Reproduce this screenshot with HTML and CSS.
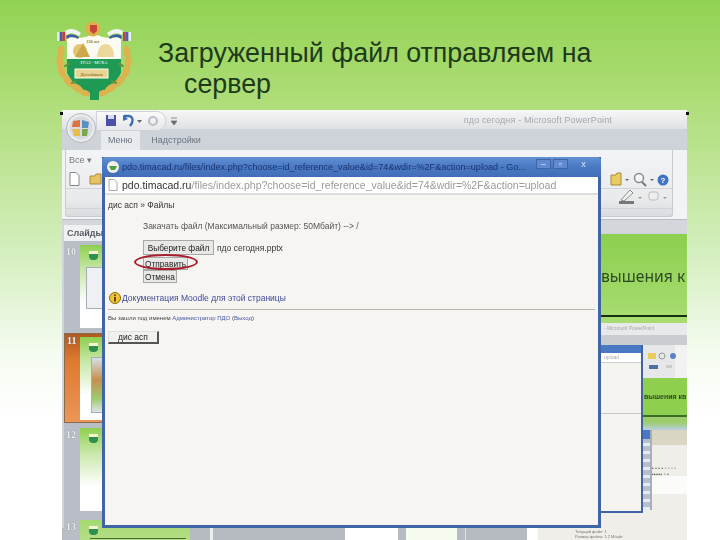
FILE: index.html
```html
<!DOCTYPE html>
<html lang="ru">
<head>
  <meta charset="UTF-8">
  <title>Загруженный файл отправляем на сервер</title>
  <link rel="stylesheet" href="styles.css">
</head>
<body>
<div class="slide">

  <header class="slide-head">
    <svg class="logo" viewBox="0 0 80 80" width="80" height="80">
      <defs>
        <g id="logo-half">
          <g fill="#dcb34e">
            <ellipse cx="7" cy="31" rx="3.500" ry="6.500" transform="rotate(8 7 31)"/>
            <ellipse cx="6" cy="41" rx="3.500" ry="6.500" transform="rotate(-4 6 41)"/>
            <ellipse cx="8" cy="51" rx="3.500" ry="6.500" transform="rotate(-22 8 51)"/>
            <ellipse cx="14" cy="60" rx="3.500" ry="7" transform="rotate(-40 14 60)"/>
            <ellipse cx="23" cy="67" rx="3.500" ry="7" transform="rotate(-58 23 67)"/>
            <ellipse cx="31" cy="72" rx="3" ry="6" transform="rotate(-68 31 72)"/>
          </g>
          <g fill="#5f9440">
            <ellipse cx="13" cy="44" rx="1.200" ry="3.500" transform="rotate(60 13 44)"/>
            <ellipse cx="20" cy="61" rx="1.200" ry="3.500" transform="rotate(70 20 61)"/>
          </g>
          <path d="M3 11 H5.700 V20 H3Z" fill="#e8edf5"/>
          <path d="M5.700 11 H8.300 V20 H5.700Z" fill="#4a5fb0"/>
          <path d="M8.300 11 H11 V20 H8.300Z" fill="#c73f46"/>
          <path d="M11 10 Q18 5 27 12 L25 15 Q18 10 12 14Z" fill="#f0f3f5"/>
          <path d="M12 15 Q18 11 25 16 L24 18 Q18 14 13 18Z" fill="#3f5aa8"/>
        </g>
      </defs>
      <path d="M13 15 Q28 20 40 12 Q52 20 67 15 L67 52 Q60 67 40 76 Q20 67 13 52Z" fill="#fbfbf2"/>
      <path d="M13 38 H67 V52 Q60 67 40 76 Q20 67 13 52Z" fill="#1f9a55"/>
      <use href="#logo-half"/>
      <use href="#logo-half" transform="matrix(-1 0 0 1 80 0)"/>
      <circle cx="26" cy="30" r="7" fill="#e3c46f"/>
      <path d="M21 36 L29 22 L36 36Z" fill="#cda94e"/>
      <path d="M43 36 Q44 23 52 23 Q60 24 60 36Z" fill="#ecd79c"/>
      <ellipse cx="39" cy="8" rx="7.500" ry="7.500" fill="#dcb14a"/>
      <path d="M36 4 H43 V10 L39.500 13 L36 10Z" fill="#c9433a"/>
      <text class="logo-year" x="39" y="22" text-anchor="middle">150 лет</text>
      <text class="logo-cap" x="40" y="43" text-anchor="middle">РГАЗ - МСХА</text>
      <rect x="21" y="48" width="33" height="9" fill="#e9d593" stroke="#fbfbf2"/>
      <text class="logo-plaque" x="37.500" y="54.500" text-anchor="middle">Донэйшнъ</text>
      <rect x="36" y="66" width="9" height="13" fill="#1f9a55"/>
    </svg>
    <h1 class="slide-title">Загруженный файл отправляем на сервер</h1>
  </header>

  <div class="shot">
    <span class="handle handle-left"></span>
    <span class="handle handle-right"></span>

    <!-- окно PowerPoint -->
    <div class="ppt-title">пдо сегодня - Microsoft PowerPoint</div>
    <div class="ppt-quick">
      <svg viewBox="0 0 68 18" width="68" height="18">
        <rect x="9" y="3" width="10" height="11" fill="#4a4fa8"/>
        <rect x="11" y="3" width="6" height="4" fill="#d8dcf0"/>
        <path d="M27 4 L32 4 Q37 5 35 11 L33 14" fill="none" stroke="#3c6cb4" stroke-width="2.400"/>
        <path d="M26 3 L26 9 L31 7Z" fill="#3c6cb4"/>
        <path d="M40 8 L45 8 L42.500 11Z" fill="#666"/>
        <circle cx="56" cy="9" r="4" fill="none" stroke="#bcc0c6" stroke-width="2.200"/>
      </svg>
      <svg class="quick-more" viewBox="0 0 6 9" width="6" height="9">
        <path d="M0 1 H6 M0 4 H6 L3 8Z" fill="#666" stroke="#777" stroke-width=".8"/>
      </svg>
    </div>
    <div class="ppt-orb">
      <svg viewBox="0 0 30 30" width="30" height="30">
        <circle cx="15" cy="15" r="14.500" fill="#e9ebee" stroke="#b3b7bd"/>
        <circle cx="15" cy="15" r="11.500" fill="#d8dadd"/>
        <path d="M7 8 L14 7 V14 H6Z" fill="#dc7440"/>
        <path d="M16 7 L23 9 L22 15 H16Z" fill="#5a8fc4"/>
        <path d="M6 16 H14 V23 L8 23Z" fill="#e8bd4a"/>
        <path d="M16 16 H22 L21 23 H16Z" fill="#77a850"/>
      </svg>
    </div>
    <div class="ppt-tabs">
      <span class="ppt-tab ppt-tab-on">Меню</span>
      <span class="ppt-tab">Надстройки</span>
    </div>
    <div class="ppt-ribbon">
      <div class="ribbon-panel">
        <span class="ribbon-all">Все ▾</span>
        <div class="ribbon-icons">
          <svg viewBox="0 0 36 14" width="36" height="14">
            <path d="M2 .500 H8 L11 3.500 V13.500 H2Z" fill="#fff" stroke="#888"/>
            <path d="M22 4 H27 L28 2 H33 V12 H22Z" fill="#e9c263" stroke="#a88a3a"/>
          </svg>
        </div>
        <div class="ribbon-line ribbon-line-a"></div>
        <div class="ribbon-line ribbon-line-b"></div>
        <div class="ribbon-tools">
          <svg viewBox="0 0 66 16" width="66" height="16">
            <path d="M6 3 H11 L12 1 H16 V13 H6Z" fill="#e9cd63" stroke="#a88a3a"/>
            <path d="M20 7 L24 7 L22 9Z" fill="#666"/>
            <circle cx="34" cy="6" r="4.500" fill="#f5f7fa" stroke="#8b8b8b" stroke-width="1.500"/>
            <path d="M37 10 L41 14" stroke="#777" stroke-width="2"/>
            <path d="M45 7 L49 7 L47 9Z" fill="#666"/>
            <circle cx="58" cy="8" r="5.500" fill="#3f74c2"/>
            <text class="help-mark" x="58" y="11" text-anchor="middle">?</text>
          </svg>
        </div>
        <div class="ribbon-tools ribbon-tools-low">
          <svg viewBox="0 0 60 16" width="60" height="16">
            <path d="M5 11 L14 1 L17 4 L8 12Z" fill="#f2f2f2" stroke="#888"/>
            <rect x="3" y="12" width="15" height="3" fill="#777"/>
            <path d="M22 8 L26 8 L24 10Z" fill="#999"/>
            <rect x="33" y="3" width="9" height="8" rx="2" fill="#eee" stroke="#bbb"/>
            <path d="M47 8 L51 8 L49 10Z" fill="#999"/>
          </svg>
        </div>
      </div>
    </div>
    <div class="ppt-strip"></div>

    <div class="bottom-strip">
      <i class="seg seg-a"></i>
      <i class="seg seg-line"></i>
      <i class="seg seg-b"></i>
      <i class="seg seg-white"></i>
      <i class="seg seg-gap"></i>
      <i class="seg seg-pale"></i>
      <i class="seg seg-gap"></i>
      <i class="seg seg-line-thin"></i>
      <i class="seg seg-c"></i>
      <i class="seg seg-end"></i>
      <p class="bottom-text">Текущий файл: 1<br>Размер файла: 1.2 Мбайт</p>
    </div>

    <!-- миниатюры -->
    <div class="thumbs">
      <div class="thumbs-tab">Слайды</div>
      <div class="thumb-row thumb-row-10"><span>10</span><div class="thumb"><i class="thumb-logo"></i><i class="thumb-shot"></i></div></div>
      <div class="thumb-row thumb-row-11"><span>11</span><div class="thumb"><i class="thumb-logo"></i><i class="thumb-shot"></i></div></div>
      <div class="thumb-row thumb-row-12"><span>12</span><div class="thumb"><i class="thumb-logo"></i></div></div>
      <div class="thumb-row thumb-row-13"><span>13</span><div class="thumb thumb-wide"><i class="thumb-logo"></i><i class="thumb-rule"></i></div></div>
    </div>

    <!-- большой слайд и вложенный снимок справа -->
    <div class="stage">
      <div class="stage-text">вышения к</div>
      <div class="stage-line"></div>
    </div>
    <div class="nested">
      <div class="nested-lip"></div>
      <div class="nested-title">- Microsoft PowerPoint</div>
      <div class="nested-tabs"></div>
      <div class="nested-ribbon">
        <svg viewBox="0 0 36 20" width="36" height="20">
          <rect x="1" y="2" width="8" height="6" fill="#e9cd63"/>
          <circle cx="15" cy="5" r="3" fill="none" stroke="#999"/>
          <circle cx="26" cy="5" r="3" fill="#5a82c4"/>
          <rect x="2" y="14" width="9" height="4" fill="#4f6ea8"/>
          <rect x="19" y="14" width="6" height="3" fill="#ccc"/>
        </svg>
      </div>
      <div class="nested-green"><span>вышения кв</span></div>
      <div class="nested-under"></div>
      <div class="nested-page">
        <div class="page-beige"></div>
        <div class="page-tiny">▪ ▪ ▪ ▪ ▫ ▫ ▫ ▫<br>▪▪▪▪▪▪ ▫ ▪</div>
        <div class="page-white"></div>
      </div>
      <div class="nested-scroll"><i class="scroll-cap"></i></div>
      <div class="nested-window">
        <div class="nested-window-bar"></div>
        <div class="nested-window-url">upload</div>
        <div class="nested-window-rule"></div>
      </div>
    </div>

    <!-- окно браузера -->
    <div class="browser">
      <div class="browser-bar">
        <svg class="browser-fav" viewBox="0 0 12 12" width="12" height="12">
          <circle cx="6" cy="6" r="6" fill="#f1f1e8"/>
          <path d="M2 5 H10 L8 9 H4Z" fill="#4ea246"/>
        </svg>
        <span class="browser-caption">pdo.timacad.ru/files/index.php?choose=id_reference_value&amp;id=74&amp;wdir=%2F&amp;action=upload - Go...</span>
        <span class="browser-btn">–</span>
        <span class="browser-btn">▫</span>
        <span class="browser-btn browser-btn-close">x</span>
      </div>
      <div class="browser-url">
        <svg viewBox="0 0 10 12" width="10" height="12">
          <path d="M1 .500 H6 L9 3.500 V11.500 H1Z" fill="#fff" stroke="#a8a8a8"/>
        </svg>
        <span class="url-host">pdo.timacad.ru</span><span class="url-rest">/files/index.php?choose=id_reference_value&amp;id=74&amp;wdir=%2F&amp;action=upload</span>
      </div>
      <div class="page">
        <div class="crumbs">дис асп » Файлы</div>
        <div class="upload">
          <div class="upload-head">Закачать файл (Максимальный размер: 50Мбайт) --&gt; /</div>
          <div class="file-row">
            <button class="btn btn-file">Выберите файл</button>
            <span>пдо сегодня.pptx</span>
          </div>
          <div class="send-wrap">
            <button class="btn">Отправить</button>
            <span class="send-ring"></span>
          </div>
          <button class="btn">Отмена</button>
        </div>
        <div class="docs">
          <svg viewBox="0 0 12 12" width="12" height="12">
            <circle cx="6" cy="6" r="5.500" fill="#f2c230" stroke="#8a6d12"/>
            <rect x="5.200" y="5" width="1.600" height="4.500" fill="#3a2f08"/>
            <rect x="5.200" y="2.500" width="1.600" height="1.600" fill="#3a2f08"/>
          </svg>
          <a>Документация Moodle для этой страницы</a>
        </div>
        <div class="rule"></div>
        <div class="login">Вы зашли под именем <a>Администратор ПДО</a> (<a>Выход</a>)</div>
        <button class="btn-home">дис асп</button>
      </div>
    </div>
  </div>

</div>
</body>
</html>
```

FILE: styles.css
```css
* {
  box-sizing: border-box;
}

body {
  margin: 0;
  background: #fff;
  font-family: "Liberation Sans", Arial, sans-serif;
}

.slide {
  width: 720px;
  height: 540px;
  overflow: hidden;
  background: linear-gradient(#92d252 0, #aedd78 100px, #d4eebd 250px, #f4fbef 350px, #fff 420px);
}

.slide-head {
  display: flex;
  align-items: flex-start;
  height: 110px;
  padding: 21px 0 0 54px;
}

.logo {
  flex: none;
}

.logo-cap {
  font-size: 4.500px;
  font-family: "Liberation Serif", serif;
  fill: #fff;
}

.logo-year {
  font-size: 4px;
  font-weight: bold;
  font-family: "Liberation Serif", serif;
  fill: #8a6d20;
}

.logo-plaque {
  font-size: 5px;
  font-family: "Liberation Serif", serif;
  fill: #7a5c14;
}

.help-mark {
  font-size: 8px;
  font-weight: bold;
  fill: #fff;
}

.slide-title {
  width: 450px;
  margin: 17px 0 0 24px;
  padding-left: 26px;
  text-indent: -26px;
  color: #1e3a1c;
  font-size: 26.800px;
  line-height: 31px;
  font-weight: normal;
}

/* снимок экрана */
.shot {
  position: relative;
  width: 625px;
  height: 430px;
  margin-left: 62px;
  background: #cfd3da;
  filter: blur(.35px);
}

.handle {
  position: absolute;
  top: 2px;
  width: 3px;
  height: 3px;
  background: #111;
}

.handle-left {
  left: -2px;
}

.handle-right {
  right: -2px;
}

.ppt-title {
  height: 19px;
  padding: 5px 75px 0 0;
  text-align: right;
  font-size: 9px;
  letter-spacing: .15px;
  color: #a4a8ae;
  background: linear-gradient(#f6f6f6, #dfe1e4);
}

.ppt-orb {
  position: absolute;
  left: 4px;
  top: 3px;
}

.ppt-quick {
  position: absolute;
  left: 34px;
  top: 1px;
  display: flex;
  align-items: center;
  gap: 5px;
}

.ppt-quick svg:first-child {
  background: linear-gradient(#fafafa, #e6e7ea);
  border: 1px solid #d0d2d6;
  border-radius: 0 9px 9px 0;
  box-sizing: content-box;
}

.ppt-tabs {
  display: flex;
  height: 21px;
  padding-left: 39px;
  background: #ced2d9;
}

.ppt-tab {
  padding: 6px 13px 0 7px;
  font-size: 9px;
  color: #6b7480;
}

.ppt-tab-on {
  padding: 6px 8px 0 7px;
  margin-right: 4px;
  background: #e8eaed;
}

.ppt-ribbon {
  height: 70px;
  padding: 0 14px 2px 3px;
  background: #f2f3f4;
  border-bottom: 1px solid #b9bdc3;
}

.ribbon-panel {
  position: relative;
  height: 100%;
  background: linear-gradient(#f3f4f6, #e8eaec 75%, #d9dbdf);
  border: 1px solid #c8cbd0;
  border-top: 0;
  border-radius: 0 0 3px 3px;
}

.ribbon-all {
  position: absolute;
  left: 3px;
  top: 5px;
  font-size: 9px;
  color: #767d87;
}

.ribbon-icons {
  position: absolute;
  left: 2px;
  top: 22px;
}

.ribbon-line {
  position: absolute;
  left: 0;
  right: 0;
  height: 1px;
  background: #d0d3d7;
}

.ribbon-line-a {
  top: 38px;
}

.ribbon-line-b {
  top: 58px;
}

.ribbon-tools {
  position: absolute;
  left: 539px;
  top: 22px;
}

.ribbon-tools-low {
  top: 39px;
  left: 550px;
}

.ppt-strip {
  height: 13px;
  background: #d3d6db;
}

/* миниатюры */
.thumbs {
  position: absolute;
  left: 2px;
  top: 115px;
  bottom: 0;
  width: 40px;
  background: #b9bec6;
}

.thumbs-tab {
  height: 16px;
  padding: 3px 0 0 3px;
  background: #eef0f2;
  font-size: 9px;
  font-weight: bold;
  color: #555b66;
  white-space: nowrap;
  overflow: hidden;
}

.thumb-row {
  position: absolute;
  left: 0;
  width: 40px;
  color: #eef0f2;
  font-size: 10px;
  font-weight: bold;
  font-family: "Liberation Serif", serif;
}

.thumb-row span {
  position: absolute;
  left: 2px;
  top: 1px;
  text-shadow: 0 0 1px #666;
}

.thumb-row-10 {
  top: 20px;
  height: 85px;
}

.thumb-row-11 {
  top: 108px;
  height: 90px;
  background: linear-gradient(#b05a22, #de7a30 30%, #ea9658);
  border: 1px solid #8b6a4a;
}

.thumb-row-11 .thumb {
  top: 3px;
  left: 15px;
}

.thumb-row-12 {
  top: 203px;
  height: 85px;
}

.thumb-row-13 {
  top: 295px;
  height: 20px;
}

.thumb {
  position: absolute;
  left: 16px;
  top: 0;
  width: 24px;
  height: 83px;
  overflow: hidden;
  background: linear-gradient(#8ecf50, #c8e8a8 30%, #fff 70%);
}

.thumb-wide {
  width: 110px;
  height: 20px;
  background: linear-gradient(#a5d970, #b5de85);
}

.thumb-logo {
  position: absolute;
  left: 9px;
  top: 6px;
  width: 9px;
  height: 9px;
  border-radius: 0 0 4px 4px;
  background: #2e8f50;
  border-top: 3px solid #f4f2d0;
}

.thumb-rule {
  position: absolute;
  left: 10px;
  right: 4px;
  top: 18px;
  height: 1px;
  background: #43702c;
}

.thumb-shot {
  position: absolute;
  left: 6px;
  top: 22px;
  width: 20px;
  height: 42px;
  background: #eef0f3;
  border: 1px solid #a8aeb8;
}

.thumb-row-11 .thumb-shot {
  left: 11px;
  top: 20px;
  height: 56px;
  background: linear-gradient(#d6dfe8, #c58f4d 40%, #9ecb70 75%, #dfe3e8);
}

/* большой слайд */
.stage {
  position: absolute;
  left: 539px;
  top: 124px;
  width: 86px;
  height: 86px;
  background: linear-gradient(#8ccf4e, #a8dc72);
}

.stage-text {
  position: absolute;
  left: 0;
  top: 31px;
  font-size: 15.700px;
  color: #2c4a22;
  font-family: "Noto Sans", sans-serif;
  white-space: nowrap;
}

.stage-line {
  position: absolute;
  left: 0;
  right: 0;
  top: 81px;
  height: 2px;
  background: #17300f;
}

.nested {
  position: absolute;
  left: 539px;
  top: 210px;
  width: 86px;
  height: 208px;
  background: #efeee8;
  overflow: hidden;
}

.nested-lip {
  height: 3px;
  background: #a8dc72;
}

.nested-title {
  height: 12px;
  padding: 2px 0 0 3px;
  font-size: 5px;
  color: #a8a8a8;
  background: #e8e9ea;
  white-space: nowrap;
}

.nested-tabs {
  height: 10px;
  background: #c9ccd1;
}

.nested-ribbon {
  height: 33px;
  padding: 6px 0 0 46px;
  background: linear-gradient(90deg, #e6e7e9 74px, #f2f2f3 74px);
}

.nested-green {
  height: 39px;
  padding: 15px 0 0 43px;
  font-size: 7px;
  font-weight: bold;
  color: #2d4a20;
  white-space: nowrap;
  background: #8fcf50;
  border-bottom: 2px solid #3d6c2a;
}

.nested-under {
  height: 13px;
  background: linear-gradient(#9dcc6c 40%, #b9cfe0);
}

.nested-page {
  position: relative;
  height: 98px;
  background: #efeee8;
}

.page-beige {
  position: absolute;
  left: 51px;
  right: 0;
  top: 0;
  height: 15px;
  background: #d9d6c4;
}

.page-tiny {
  position: absolute;
  left: 51px;
  top: 35px;
  font-size: 5px;
  line-height: 6px;
  color: #666;
  white-space: nowrap;
}

.page-white {
  position: absolute;
  left: 51px;
  right: 0;
  top: 46px;
  height: 18px;
  background: #fbfbf9;
}

.nested-scroll {
  position: absolute;
  left: 41px;
  top: 110px;
  width: 10px;
  height: 80px;
  padding-top: 10px;
  background: repeating-linear-gradient(#b5bfce 0 5px, #e8ecf2 5px 8px);
  border-right: 2px solid #a8aeb8;
}

.scroll-cap {
  position: absolute;
  left: 0;
  right: 0;
  top: 0;
  height: 9px;
  background: #4a79c4;
}

.nested-window {
  position: absolute;
  left: 0;
  top: 25px;
  width: 42px;
  height: 168px;
  background: #f5f4f0;
  border-right: 2px solid #3f63a3;
  border-bottom: 2px solid #3f63a3;
}

.nested-window-bar {
  height: 8px;
  background: #4a79c4;
}

.nested-window-url {
  height: 10px;
  padding: 1px 0 0 3px;
  font-size: 5px;
  color: #aaa;
  background: #fff;
  border-bottom: 1px solid #ccc;
}

.nested-window-rule {
  margin-top: 50px;
  height: 1px;
  background: #c8c8c4;
}

/* нижняя полоса под окном */
.bottom-strip {
  position: absolute;
  left: 0;
  right: 0;
  top: 418px;
  display: flex;
  height: 12px;
  background: #b6bac1;
}

.seg {
  flex: none;
}

.seg-a {
  width: 148px;
}

.seg-line {
  width: 3px;
  background: #eceef0;
}

.seg-b {
  width: 132px;
}

.seg-white {
  width: 53px;
  background: #fff;
}

.seg-gap {
  width: 8px;
}

.seg-pale {
  width: 51px;
  background: #f6fbf0;
}

.seg-line-thin {
  width: 1px;
  background: #dfe1e4;
}

.seg-c {
  width: 61px;
}

.seg-end {
  width: 11px;
  background: #fff;
}

.bottom-text {
  width: 149px;
  margin: 0;
  padding: 1px 0 0 37px;
  font-size: 4px;
  line-height: 5px;
  color: #777;
  white-space: nowrap;
  background: #efeee8;
}

/* окно браузера */
.browser {
  position: absolute;
  left: 40px;
  top: 47px;
  width: 499px;
  height: 371px;
  display: flex;
  flex-direction: column;
  background: #f6f5f1;
  border: 3px solid #3f65a6;
  border-top: 0;
}

.browser-bar {
  display: flex;
  align-items: center;
  height: 20px;
  margin: 0 -3px;
  padding: 0 3px 0 5px;
  background: linear-gradient(#6290d4, #4a79c4 50%, #426eb9);
  border-radius: 4px 4px 0 0;
}

.browser-fav {
  flex: none;
}

.browser-caption {
  flex: none;
  width: 414px;
  margin-left: 3px;
  font-size: 9.100px;
  color: #1a3570;
  white-space: nowrap;
}

.browser-btn {
  width: 15px;
  height: 10px;
  margin: -6px 2px 0 0;
  text-align: center;
  font-size: 9px;
  line-height: 9px;
  color: #dfe8f8;
  background: #5f8ad0;
  border: 1px solid #3f65a6;
}

.browser-btn-close {
  width: 27px;
  margin-right: 0;
  background: none;
  border-color: transparent;
}

.browser-url {
  display: flex;
  align-items: center;
  gap: 4px;
  height: 18px;
  padding-left: 3px;
  font-size: 10.500px;
  background: #fff;
  border-bottom: 2px solid #ddd;
  white-space: nowrap;
  overflow: hidden;
}

.url-host {
  color: #333;
}

.url-rest {
  margin-left: -4px;
  color: #9a9a9a;
}

.page {
  flex: 1;
  padding: 5px 3px;
  font-size: 8.500px;
  color: #333;
}

.crumbs {
  height: 21px;
}

.upload {
  display: flex;
  flex-direction: column;
  align-items: flex-start;
  padding-left: 35px;
}

.upload-head {
  height: 19px;
  color: #555;
}

.file-row {
  display: flex;
  align-items: center;
  gap: 3px;
}

.btn {
  padding: 0 1px;
  height: 13px;
  font-family: inherit;
  font-size: 8.300px;
  color: #222;
  background: #e8e8e6;
  border: 1px solid #a8a8a8;
}

.btn-file {
  width: 71px;
  height: 15px;
  padding: 0;
}

.send-wrap {
  position: relative;
  display: flex;
  margin-top: 2px;
}

.send-ring {
  position: absolute;
  left: -9px;
  top: -3px;
  width: 64px;
  height: 16px;
  border: 2.500px solid #a81e2c;
  border-radius: 50%;
}

.docs {
  display: flex;
  align-items: center;
  gap: 1px;
  margin: 9px 0 0 1px;
}

.docs a {
  color: #3f4a9a;
}

.rule {
  height: 1px;
  margin-top: 5px;
  background: #b5b5b0;
}

.login {
  margin-top: 5px;
  font-size: 6px;
  color: #444;
}

.login a {
  color: #4656a0;
}

.btn-home {
  display: block;
  width: 51px;
  height: 13px;
  margin-top: 10px;
  padding: 0;
  font-family: inherit;
  font-size: 8.500px;
  color: #222;
  background: #f1f1ee;
  border: 1px solid #e0e0dc;
  border-right: 2px solid #555;
  border-bottom: 2px solid #555;
}
```
